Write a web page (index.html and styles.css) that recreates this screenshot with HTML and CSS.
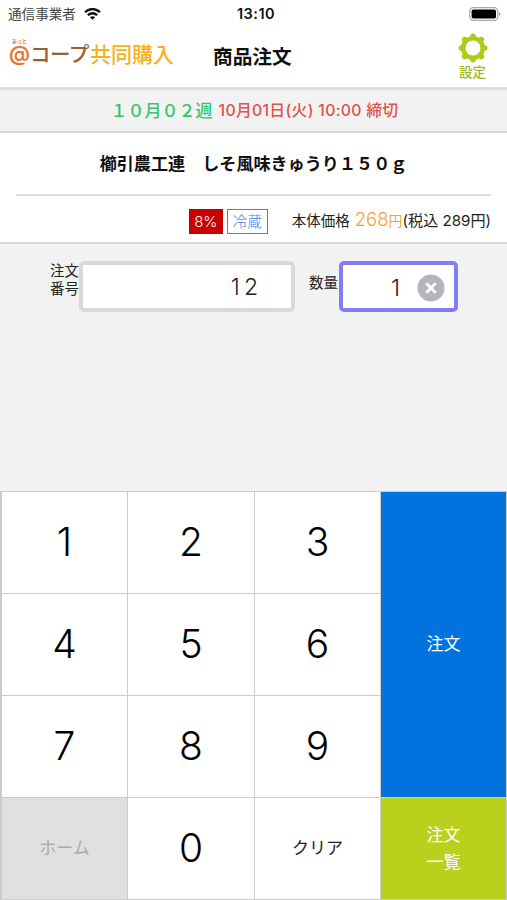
FILE: index.html
```html
<!DOCTYPE html>
<html lang="ja">
<head>
<meta charset="utf-8">
<meta name="viewport" content="width=device-width, initial-scale=1">
<title>商品注文</title>
<link rel="stylesheet" href="styles.css">
</head>
<body>
<div class="app">
  <div class="status">
    <div class="carrier"><span>通信事業者</span>
      <svg width="17" height="12" viewBox="0 0 17 12" fill="none" stroke="#111" stroke-width="2.4"><path d="M1 4.2Q8.5-2 16 4.2M3.8 7.1Q8.5 3.2 13.2 7.1"/><path d="M8.5 11.8 5.9 9.2Q8.5 7.2 11.1 9.2Z" fill="#111" stroke="none"/></svg>
    </div>
    <time class="clock">13:10</time>
    <svg class="battery" width="32" height="14" viewBox="0 0 32 14"><rect x=".7" y=".7" width="28" height="12.6" rx="3.6" fill="#fff" stroke="#aaa" stroke-width="1.2"/><rect x="2.6" y="2.4" width="24.4" height="9.2" rx="1.8" fill="#000"/><path d="M30.2 5v4q1.2-.6 1.2-2t-1.2-2" fill="#888"/></svg>
  </div>
  <header class="header">
    <div class="logo">
      <div class="at"><span class="ruby">あっと</span><span class="at-sign">@</span></div>
      <span class="coop">コープ</span><span class="joint">共同購入</span>
    </div>
    <h1 class="title">商品注文</h1>
    <div class="settings">
      <svg width="30" height="30" viewBox="-15 -15 30 30" fill="none" stroke="#aecb17">
        <circle r="9.7" stroke-width="4.8"/>
        <path stroke-width="5.4" stroke-linecap="round" d="M0-11V-11.8M0 11V11.8M-11 0H-11.8M11 0H11.8M8-8 8.5-8.5M-8-8-8.5-8.5M8 8 8.5 8.5M-8 8-8.5 8.5"/>
        <circle r="7.4" fill="#fff" stroke="none"/>
      </svg>
      <span>設定</span>
    </div>
  </header>
  <div class="week"><span class="term">１０月０２週</span><span class="deadline">10月01日(火) 10:00 締切</span></div>
  <section class="product">
    <h2 class="name">櫛引農工連　しそ風味きゅうり１５０ｇ</h2>
    <div class="info">
      <span class="tax">8%</span><span class="cold">冷蔵</span>
      <div class="price"><span class="plabel">本体価格</span><span class="amount">268<small>円</small></span><span class="incl">(税込 289円)</span></div>
    </div>
  </section>
  <section class="entry">
    <div class="label number">注文<br>番号</div>
    <div class="field order">12</div>
    <div class="label qty">数量</div>
    <div class="field count"><span>1</span>
      <svg width="28" height="28" viewBox="0 0 28 28"><circle cx="14" cy="14" r="13.5" fill="#b2b6bb"/><path d="M9.3 9.3 18.7 18.7M18.7 9.3 9.3 18.7" stroke="#fff" stroke-width="2.8"/></svg>
    </div>
  </section>
  <div class="keypad">
    <button class="key">1</button><button class="key">2</button><button class="key">3</button>
    <button class="submit">注文</button>
    <button class="key">4</button><button class="key">5</button><button class="key">6</button>
    <button class="key">7</button><button class="key">8</button><button class="key">9</button>
    <button class="home">ホーム</button><button class="key">0</button><button class="clear">クリア</button>
    <button class="list">注文<br>一覧</button>
  </div>
</div>
</body>
</html>
```
FILE: styles.css
```css
* { box-sizing: border-box; }
body { margin: 0; font-family: Inter, "Noto Sans CJK JP", sans-serif; color: #222; background: #f2f2f2; }
.app { width: 507px; height: 900px; display: flex; flex-direction: column; overflow: hidden; white-space: nowrap; }
.status { height: 27px; background: #fff; display: grid; grid-template-columns: 1fr auto 1fr; align-items: center; padding: 0 6px 0 8px; }
.carrier { display: flex; align-items: center; gap: 8px; font-size: 13.6px; line-height: 20px; color: #444; }
.clock { font-size: 14.5px; font-weight: 600; line-height: 20px; color: #111; letter-spacing: .5px; padding-left: 3px; }
.battery { justify-self: end; }
.header { height: 63px; background: #fff; border-bottom: 3px solid #ddd; display: grid; grid-template-columns: 204px 1fr 60px; }
.logo { display: flex; padding: 11px 0 0 9px; }
.at { width: 21px; height: 34px; display: flex; flex-direction: column; align-items: center; color: #e8762c; }
.ruby { font-size: 5px; line-height: 6px; font-weight: 700; }
.at-sign { font-size: 21px; line-height: 19px; font-weight: 600; }
.coop { width: 60px; font-size: 20.5px; line-height: 34px; font-weight: 500; color: #946134; letter-spacing: -.5px; }
.joint { font-size: 21px; line-height: 34px; font-weight: 500; color: #f6b11a; }
.title { margin: 0; font-size: 19.7px; line-height: 30px; padding: 15px 0 0 9px; font-weight: 600; color: #111; }
.settings { display: flex; flex-direction: column; align-items: center; padding: 6px 9px 0 0; font-size: 13.5px; line-height: 19px; font-weight: 500; color: #9fba1c; }
.week { height: 43px; border-bottom: 2px solid #d8d8d8; display: flex; justify-content: center; align-items: center; gap: 6px; padding: 0 0 3px 2px; font-weight: 500; }
.term { font-size: 17px; color: #36c46c; }
.deadline { font-size: 15.8px; letter-spacing: .3px; color: #e0524c; }
.product { height: 111px; background: #fff; border-bottom: 2px solid #d8d8d8; padding: 0 16px; }
.name { margin: 0; height: 63px; border-bottom: 2px solid #ddd; text-align: center; font-size: 17.1px; line-height: 61px; font-weight: 600; color: #111; }
.info { display: flex; align-items: center; justify-content: flex-end; height: 46px; padding-top: 5px; }
.tax { width: 34px; height: 25px; background: #c90000; color: #fff; font-size: 15px; font-weight: 300; line-height: 25px; text-align: center; }
.cold { width: 41px; height: 25px; border: 1.5px solid #3b83ee; color: #3b83ee; font-size: 14.5px; font-weight: 300; line-height: 23px; text-align: center; margin: 0 24px 0 4px; }
.price { display: flex; align-items: baseline; font-size: 14.5px; line-height: 24px; padding-bottom: 4px; }
.plabel { margin-right: 5px; }
.amount { font-size: 18.5px; font-weight: 300; color: #f6a23a; }
.amount small { font-size: 14px; font-weight: 400; }
.incl { font-size: 15.1px; }
.entry { height: 247px; display: flex; align-items: flex-start; padding: 17px 0 0 50px; }
.label { font-size: 14.5px; line-height: 18px; }
.field { height: 51px; background: #fff; border-radius: 5px; display: flex; align-items: center; justify-content: flex-end; font-size: 23px; font-weight: 300; }
.number { width: 29px; padding-top: 1px; }
.order { width: 216px; border: 4px solid #d9d9d9; padding: 0 29px 0 0; letter-spacing: 4px; }
.qty { width: 30px; margin-left: 14px; padding-top: 13px; }
.count { width: 119px; border: 4px solid #827df3; padding: 2px 9px 0 0; gap: 17px; }
.keypad { height: 409px; display: grid; grid-template-columns: 125px 126px 125px 125px; grid-template-rows: repeat(4, 101px); gap: 1px; border: solid #ccc; border-width: 1px 1px 1px 2px; background: #ccc; }
.keypad button { border: 0; border-radius: 0; margin: 0; padding: 0; background: #fff; color: #000; font: 400 17px/27px Inter, "Noto Sans CJK JP", sans-serif; }
.keypad .key { font-size: 39px; line-height: 48px; font-weight: 300; padding: 0 0 2px; }
.keypad .submit { grid-row: span 3; background: #0073df; color: #fff; }
.keypad .home { background: #e0e0e0; color: #aaa; }
.keypad .clear { color: #222; }
.keypad .list { background: #b9d11c; color: #fff; }
```
